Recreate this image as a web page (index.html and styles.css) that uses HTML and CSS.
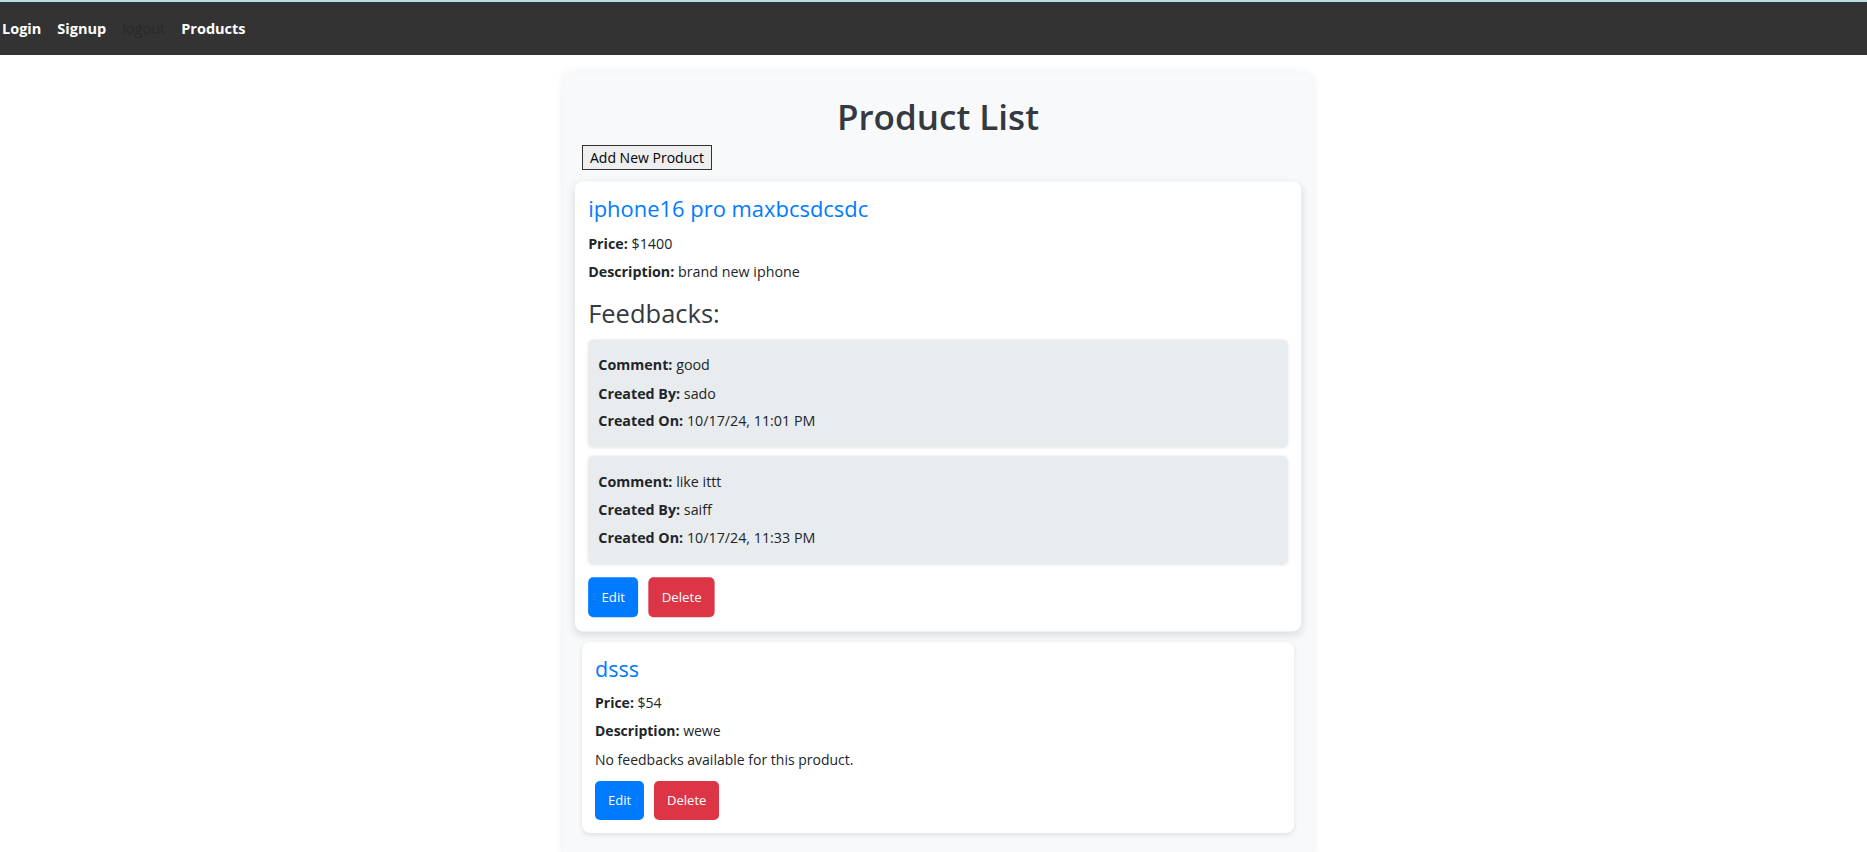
FILE: index.html
```html
<!DOCTYPE html>
<html lang="en">
<head>
<meta charset="utf-8">
<title>Product List</title>
<link rel="stylesheet" href="styles.css">
</head>
<body>
<nav class="navbar">
  <a class="nav-link" href="#">Login</a>
  <a class="nav-link" href="#">Signup</a>
  <button class="nav-logout" type="button">logout</button>
  <a class="nav-link" href="#">Products</a>
</nav>
<main class="page">
  <div class="container">
    <h1 class="page-title">Product List</h1>
    <button class="add-btn" type="button">Add New Product</button>

    <div class="product-card product-card--hover">
      <h2 class="product-name">iphone16 pro maxbcsdcsdc</h2>
      <p class="line"><strong>Price:</strong> $1400</p>
      <p class="line"><strong>Description:</strong> brand new iphone</p>
      <h3 class="feedback-heading">Feedbacks:</h3>
      <div class="feedback-list">
        <div class="feedback">
          <p class="fb-line"><strong>Comment:</strong> good</p>
          <p class="fb-line"><strong>Created By:</strong> sado</p>
          <p class="fb-line"><strong>Created On:</strong> 10/17/24, 11:01 PM</p>
        </div>
        <div class="feedback">
          <p class="fb-line"><strong>Comment:</strong> like ittt</p>
          <p class="fb-line"><strong>Created By:</strong> saiff</p>
          <p class="fb-line"><strong>Created On:</strong> 10/17/24, 11:33 PM</p>
        </div>
      </div>
      <div class="actions">
        <button class="btn btn-edit" type="button">Edit</button>
        <button class="btn btn-delete" type="button">Delete</button>
      </div>
    </div>

    <div class="product-card">
      <h2 class="product-name">dsss</h2>
      <p class="line"><strong>Price:</strong> $54</p>
      <p class="line"><strong>Description:</strong> wewe</p>
      <p class="line">No feedbacks available for this product.</p>
      <div class="actions">
        <button class="btn btn-edit" type="button">Edit</button>
        <button class="btn btn-delete" type="button">Delete</button>
      </div>
    </div>
  </div>
</main>
</body>
</html>
```

FILE: styles.css
```css
* {
  box-sizing: border-box;
}

body {
  margin: 0;
  background: #ffffff;
  font-family: "Open Sans", "Noto Sans", sans-serif;
  font-size: 14px;
  color: #212529;
}

.navbar {
  display: flex;
  align-items: center;
  gap: 16px;
  height: 55px;
  padding-left: 2px;
  background: #333333;
  border-top: 2px solid #b4e0e2;
}

.nav-link {
  color: #ffffff;
  font-weight: 700;
  font-size: 14.5px;
  text-decoration: none;
}

.nav-logout {
  background: none;
  border: 0;
  padding: 0;
  font-family: inherit;
  font-size: 14.5px;
  color: #282828;
}

.page {
  display: flex;
  justify-content: center;
  padding-left: 9px;
}

.container {
  width: 750px;
  margin-top: 18px;
  padding: 20px 19px 19px;
  background: #f8f9fa;
  border-radius: 10px;
  box-shadow: 0 0 10px rgba(0, 0, 0, 0.08);
}

.page-title {
  margin: 1.5px 0 7.5px;
  font-size: 35px;
  line-height: 43px;
  font-weight: 600;
  text-align: center;
  color: #343a40;
}

.add-btn {
  display: block;
  padding: 1px 7px;
  font-family: inherit;
  font-size: 14px;
  line-height: 21px;
  color: #000000;
  background: #efefef;
  border: 1px solid #333333;
  border-radius: 0;
  margin-bottom: 15.5px;
}

.product-card {
  background: #ffffff;
  border-radius: 8px;
  padding: 13px 13px 13.5px;
  margin-bottom: 16px;
  box-shadow: 0 2px 5px rgba(0, 0, 0, 0.1);
}

.product-card--hover {
  transform: scale(1.02);
  box-shadow: 0 3px 8px rgba(0, 0, 0, 0.12);
}

.product-name {
  margin: 0 0 8.5px;
  font-size: 21.5px;
  line-height: 28px;
  font-weight: 500;
  color: #007bff;
}

.line {
  margin: 0 0 7.5px;
  line-height: 21px;
}

.feedback-heading {
  margin: 15px 0 10.5px;
  font-size: 25px;
  line-height: 30px;
  font-weight: 500;
  color: #343a40;
}

.feedback-list {
  display: flex;
  flex-direction: column;
  gap: 9px;
  margin-bottom: 14.5px;
}

.feedback {
  background: #e9ecef;
  border-radius: 5px;
  padding: 14.5px 10px;
  box-shadow: 0 1px 3px rgba(0, 0, 0, 0.1);
}

.fb-line {
  margin: 0 0 6.5px;
  line-height: 21px;
}

.fb-line:last-child {
  margin-bottom: 0;
}

.actions {
  display: flex;
  gap: 10px;
  margin-top: 11px;
}

.btn {
  padding: 9px 13px;
  font-family: inherit;
  font-size: 13px;
  line-height: 21px;
  color: #ffffff;
  border: 0;
  border-radius: 5px;
}

.btn-edit {
  background: #007bff;
}

.btn-delete {
  background: #dc3545;
}
```
